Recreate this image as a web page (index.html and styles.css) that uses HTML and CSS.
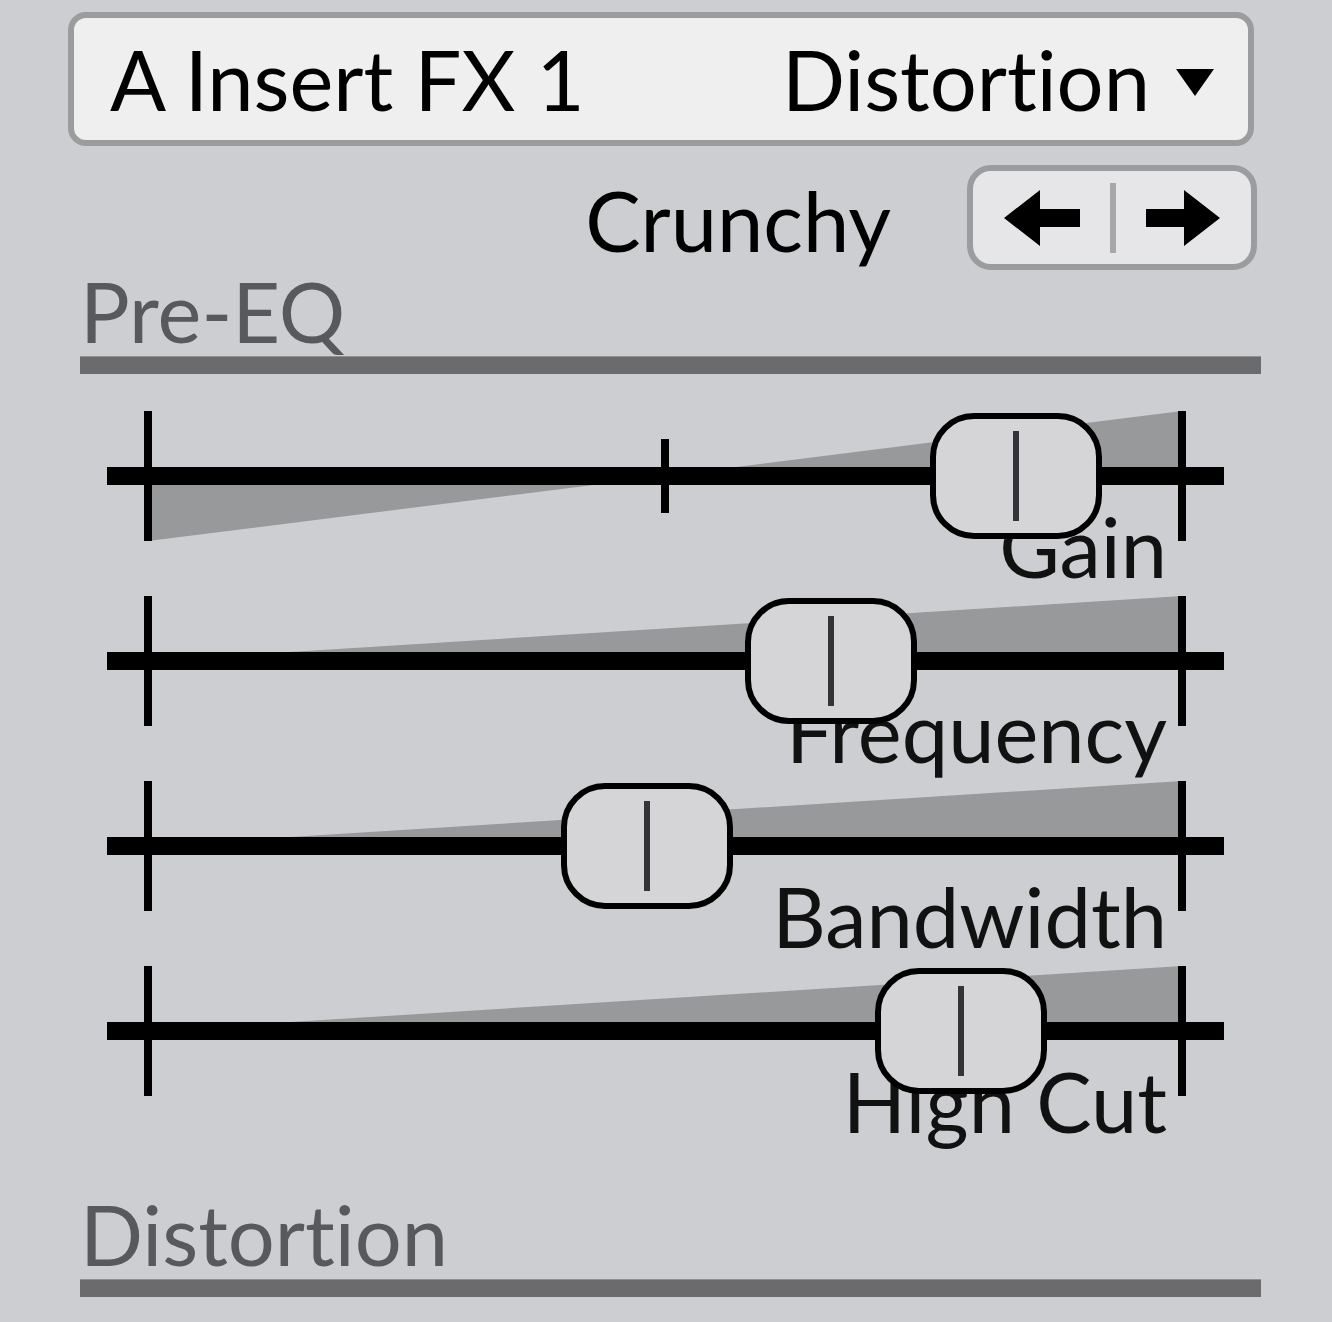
FILE: index.html
```html
<!DOCTYPE html>
<html lang="en">
<head>
  <meta charset="UTF-8">
  <title>A Insert FX 1</title>
  <link rel="stylesheet" href="styles.css">
</head>
<body>
  <div class="panel">
    <div class="fx-select">
      <span class="fx-slot">A Insert FX 1</span>
      <span class="fx-type">Distortion <span class="caret"></span></span>
    </div>

    <div class="preset-row">
      <span class="preset-name">Crunchy</span>
      <div class="preset-nav">
        <button class="nav-btn" aria-label="Previous preset">
          <svg width="76" height="56" viewBox="0 0 76 56"><path d="M0 28 L36 0 L36 19 L76 19 L76 37 L36 37 L36 56 Z" fill="#000"/></svg>
        </button>
        <span class="nav-divider"></span>
        <button class="nav-btn" aria-label="Next preset">
          <svg width="74" height="56" viewBox="0 0 74 56"><path d="M74 28 L38 0 L38 19 L0 19 L0 37 L38 37 L38 56 Z" fill="#000"/></svg>
        </button>
      </div>
    </div>

    <div class="section-title">Pre-EQ</div>
    <div class="section-bar"></div>

    <div class="sliders">
      <!-- bipolar slider -->
      <div class="slider">
        <svg class="slider-track" width="1117" height="130" viewBox="0 0 1117 130">
          <polygon points="41,65 41,130 558,65" fill="#98999b"/>
          <polygon points="558,65 1075,0 1075,65" fill="#98999b"/>
          <rect x="0" y="56" width="1117" height="18" fill="#000"/>
          <rect x="37" y="0" width="8" height="130" fill="#000"/>
          <rect x="554" y="28" width="8" height="74" fill="#000"/>
          <rect x="1071" y="0" width="8" height="130" fill="#000"/>
        </svg>
        <div class="slider-label">Gain</div>
        <div class="handle" style="left: 823px"><span class="handle-mark"></span></div>
      </div>

      <div class="slider">
        <svg class="slider-track" width="1117" height="130" viewBox="0 0 1117 130">
          <polygon points="41,65 1075,0 1075,65" fill="#98999b"/>
          <rect x="0" y="56" width="1117" height="18" fill="#000"/>
          <rect x="37" y="0" width="8" height="130" fill="#000"/>
          <rect x="1071" y="0" width="8" height="130" fill="#000"/>
        </svg>
        <div class="slider-label">Frequency</div>
        <div class="handle" style="left: 638px"><span class="handle-mark"></span></div>
      </div>

      <div class="slider">
        <svg class="slider-track" width="1117" height="130" viewBox="0 0 1117 130">
          <polygon points="41,65 1075,0 1075,65" fill="#98999b"/>
          <rect x="0" y="56" width="1117" height="18" fill="#000"/>
          <rect x="37" y="0" width="8" height="130" fill="#000"/>
          <rect x="1071" y="0" width="8" height="130" fill="#000"/>
        </svg>
        <div class="slider-label">Bandwidth</div>
        <div class="handle" style="left: 454px"><span class="handle-mark"></span></div>
      </div>

      <div class="slider">
        <svg class="slider-track" width="1117" height="130" viewBox="0 0 1117 130">
          <polygon points="41,65 1075,0 1075,65" fill="#98999b"/>
          <rect x="0" y="56" width="1117" height="18" fill="#000"/>
          <rect x="37" y="0" width="8" height="130" fill="#000"/>
          <rect x="1071" y="0" width="8" height="130" fill="#000"/>
        </svg>
        <div class="slider-label">High Cut</div>
        <div class="handle" style="left: 768px"><span class="handle-mark"></span></div>
      </div>
    </div>

    <div class="section-title section-title-last">Distortion</div>
    <div class="section-bar"></div>
  </div>
</body>
</html>
```

FILE: styles.css
```css
body {
  margin: 0;
  background-color: #cdced2;
  font-family: Lato, "Open Sans", sans-serif;
  font-variant-ligatures: none;
  color: #000;
}
.panel {
  padding-top: 12px;
  height: 1310px;
  overflow: hidden;
}
.fx-select {
  box-sizing: border-box;
  margin-left: 68px;
  width: 1186px;
  height: 134px;
  border: 6px solid #9b9c9e;
  border-radius: 18px;
  background-color: #efefef;
  display: flex;
  align-items: center;
  justify-content: space-between;
  padding: 0 34px 0 36px;
  font-size: 83px;
  line-height: 80px;
}
.fx-type {
  display: flex;
  align-items: center;
  gap: 26px;
}
.caret {
  width: 0;
  height: 0;
  border-left: 19px solid transparent;
  border-right: 19px solid transparent;
  border-top: 27px solid #000;
  margin-top: 6px;
}
.preset-row {
  display: flex;
  justify-content: flex-end;
  align-items: center;
  margin-top: 19px;
  padding-right: 75px;
}
.preset-name {
  font-size: 83px;
  line-height: 80px;
  margin-right: 76px;
  margin-top: 4px;
}
.preset-nav {
  box-sizing: border-box;
  width: 290px;
  height: 105px;
  border: 6px solid #9b9c9e;
  border-radius: 24px;
  background-color: #e6e6e8;
  display: flex;
  align-items: center;
  justify-content: center;
}
.nav-btn {
  border: none;
  background: none;
  padding: 0;
  margin: 0 30px;
  display: flex;
  cursor: pointer;
}
.nav-divider {
  width: 6px;
  height: 70px;
  background-color: #a6a7a9;
}
.section-title {
  margin-top: 1px;
  padding-left: 80px;
  font-size: 83px;
  line-height: 80px;
  color: #58595b;
}
.section-title-last {
  margin-top: 43px;
}
.section-bar {
  margin-top: 5px;
  margin-left: 80px;
  width: 1181px;
  height: 18px;
  background-color: #6b6b6d;
  border-top: 1px solid #8e8f91;
  box-sizing: border-box;
}
.sliders {
  margin-top: 37px;
  margin-left: 107px;
  width: 1117px;
}
.slider {
  position: relative;
  height: 185px;
}
.slider-track {
  display: block;
}
.slider-label {
  position: relative;
  margin-top: -35px;
  padding-right: 57px;
  text-align: right;
  font-size: 83px;
  line-height: 80px;
  color: #111;
}
.handle {
  position: absolute;
  top: 2px;
  box-sizing: border-box;
  width: 172px;
  height: 126px;
  border: 6px solid #000;
  border-radius: 44px;
  background-color: #d5d5d7;
  z-index: 2;
  display: flex;
  justify-content: center;
  align-items: center;
}
.handle-mark {
  width: 6px;
  height: 90px;
  background-color: #333438;
}
```
